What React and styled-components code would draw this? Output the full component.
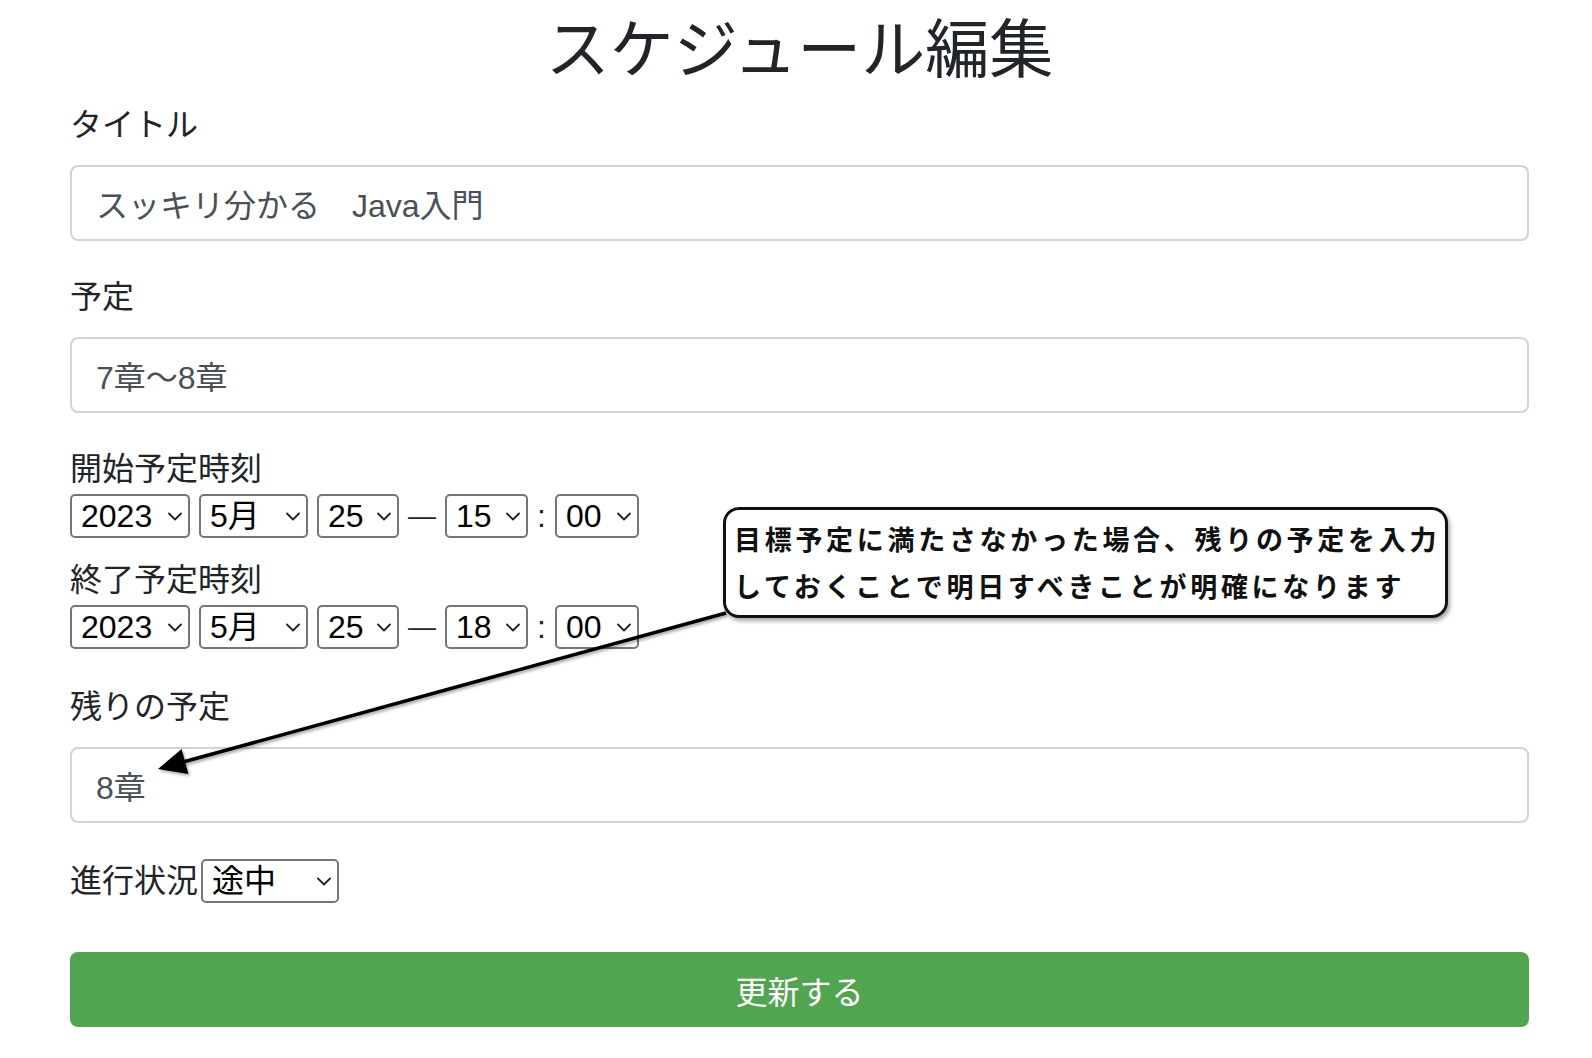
import React from "react";
import styled, { createGlobalStyle } from "styled-components";

const GlobalStyle = createGlobalStyle`
  html, body {
    margin: 0;
    padding: 0;
    background: #fff;
  }
  body {
    font-family: "Liberation Sans", "Noto Sans CJK JP", sans-serif;
    color: #212529;
  }
  * {
    box-sizing: border-box;
  }
`;

const Page = styled.div`
  position: relative;
  width: 1592px;
  min-height: 1058px;
  padding: 2px 63px 0 70px;
`;

const Heading = styled.h1`
  margin: 0 0 15px;
  font-family: "Noto Sans CJK JP", sans-serif;
  font-size: 64px;
  font-weight: 400;
  line-height: 84px;
  text-align: center;
  color: #212529;
`;

const FormGroup = styled.div`
  margin-bottom: ${(p) => p.$mb ?? 32}px;
`;

const Label = styled.label`
  display: block;
  font-size: 32px;
  line-height: 48px;
  margin-bottom: ${(p) => p.$mb ?? 16}px;
`;

const TextInput = styled.input`
  display: block;
  width: 100%;
  height: 76px;
  padding: 12px 24px;
  font-family: inherit;
  font-size: 32px;
  color: #495057;
  background: #fff;
  border: 2px solid #ced4da;
  border-radius: 8px;
  outline: none;
`;

const TimeRow = styled.div`
  display: flex;
  align-items: center;
  gap: 9px;
  height: 44px;
  margin: 1px 0 ${(p) => p.$mb ?? 18}px;
`;

const SelectWrap = styled.span`
  position: relative;
  display: inline-block;
  width: ${(p) => p.$w}px;
  height: 44px;
`;

const NativeSelect = styled.select`
  appearance: none;
  -webkit-appearance: none;
  width: 100%;
  height: 100%;
  padding: 0 0 0 9px;
  font-family: "Liberation Sans", "Noto Sans CJK JP", sans-serif;
  font-size: 32px;
  color: #000;
  background: #fff;
  border: 2px solid #767676;
  border-radius: 5px;
  outline: none;
`;

const Chevron = styled.svg`
  position: absolute;
  right: 8px;
  top: 18px;
  width: 14px;
  height: 9px;
  pointer-events: none;
`;

const Sep = styled.span`
  font-size: ${(p) => p.$size ?? 32}px;
  line-height: 44px;
  color: #212529;
`;

const StatusRow = styled.div`
  display: flex;
  align-items: center;
  margin-bottom: 47px;
`;

const StatusLabel = styled.label`
  font-size: 32px;
  line-height: 48px;
  margin-right: 3px;
`;

const SubmitButton = styled.button`
  display: block;
  width: 100%;
  height: 75px;
  font-family: "Noto Sans CJK JP", sans-serif;
  font-size: 32px;
  color: #fff;
  background: #52a550;
  border: none;
  border-radius: 8px;
`;

const Callout = styled.div`
  position: absolute;
  left: 723px;
  top: 507px;
  width: 725px;
  height: 111px;
  padding: 5px 0 0 8px;
  background: #fff;
  border: 3px solid #111;
  border-radius: 16px;
  box-shadow: 2px 3px 4px rgba(0, 0, 0, 0.35);
  font-family: "Noto Sans CJK JP", sans-serif;
  font-weight: 700;
  font-size: 27px;
  letter-spacing: 3.7px;
  line-height: 47px;
  color: #111;
  white-space: nowrap;
  z-index: 2;
`;

const ArrowLayer = styled.svg`
  position: absolute;
  left: 0;
  top: 0;
  width: 1592px;
  height: 1058px;
  pointer-events: none;
  z-index: 1;
`;

function Select({ value, width }) {
  return (
    <SelectWrap $w={width}>
      <NativeSelect defaultValue={value}>
        <option value={value}>{value}</option>
      </NativeSelect>
      <Chevron viewBox="0 0 14 9">
        <path d="M1 1.5 L7 7.5 L13 1.5" fill="none" stroke="#222" strokeWidth="1.8" strokeLinecap="round" strokeLinejoin="round" />
      </Chevron>
    </SelectWrap>
  );
}

function DateTimeRow({ hour, mb }) {
  return (
    <TimeRow $mb={mb}>
      <Select value="2023" width={120} />
      <Select value="5月" width={109} />
      <Select value="25" width={82} />
      <Sep $size={28}>—</Sep>
      <Select value={hour} width={83} />
      <Sep>:</Sep>
      <Select value="00" width={84} />
    </TimeRow>
  );
}

export default function App() {
  return (
    <>
      <GlobalStyle />
      <Page>
        <Heading>スケジュール編集</Heading>

        <FormGroup>
          <Label>タイトル</Label>
          <TextInput defaultValue="スッキリ分かる　Java入門" />
        </FormGroup>

        <FormGroup>
          <Label>予定</Label>
          <TextInput defaultValue="7章〜8章" />
        </FormGroup>

        <FormGroup $mb={0}>
          <Label $mb={0}>開始予定時刻</Label>
          <DateTimeRow hour="15" mb={18} />
          <Label $mb={0}>終了予定時刻</Label>
          <DateTimeRow hour="18" mb={34} />
        </FormGroup>

        <FormGroup $mb={34}>
          <Label>残りの予定</Label>
          <TextInput defaultValue="8章" />
        </FormGroup>

        <StatusRow>
          <StatusLabel>進行状況</StatusLabel>
          <Select value="途中" width={138} />
        </StatusRow>

        <SubmitButton>更新する</SubmitButton>

        <ArrowLayer viewBox="0 0 1592 1058">
          <defs>
            <filter id="arrowShadow" x="-5%" y="-20%" width="110%" height="140%">
              <feDropShadow dx="1.5" dy="2" stdDeviation="1.5" floodColor="#000" floodOpacity="0.35" />
            </filter>
          </defs>
          <g filter="url(#arrowShadow)">
            <line x1="726" y1="613" x2="183" y2="762" stroke="#000" strokeWidth="3.5" />
            <polygon points="158,769 188.4,774.1 181.6,749.1" fill="#000" />
          </g>
        </ArrowLayer>

        <Callout>
          目標予定に満たさなかった場合、残りの予定を入力
          <br />
          しておくことで明日すべきことが明確になります
        </Callout>
      </Page>
    </>
  );
}
